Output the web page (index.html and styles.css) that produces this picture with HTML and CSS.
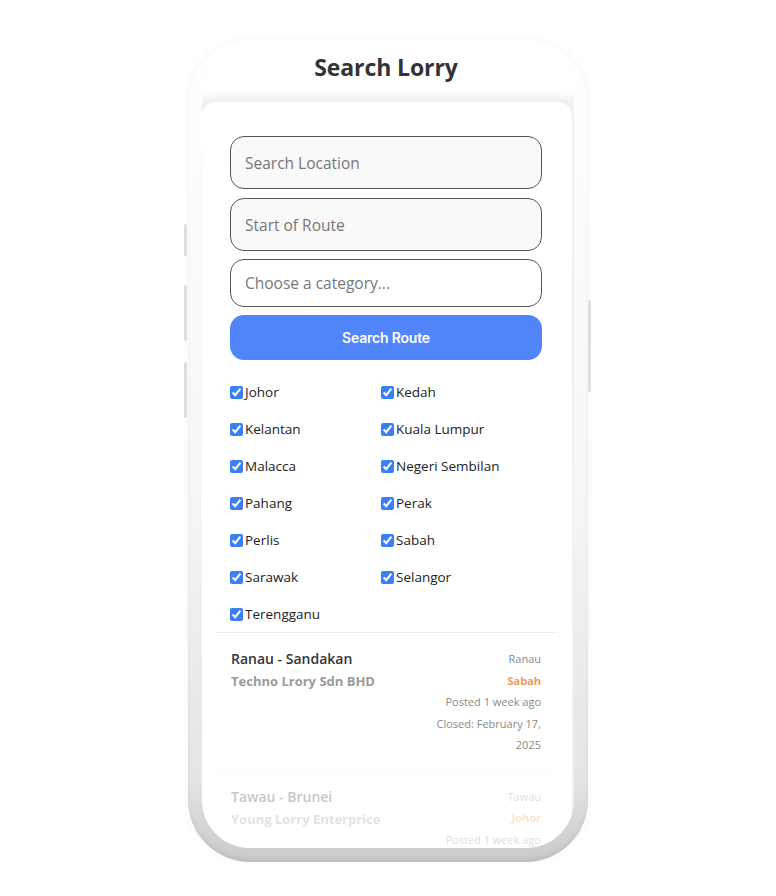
FILE: index.html
```html
<!DOCTYPE html>
<html>

<head>
  <meta charset="UTF-8">
  <title>Search Lorry</title>
  <link rel="stylesheet" href="styles.css">
</head>

<body>
  <div class="phone">
    <span class="side-btn btn-a"></span>
    <span class="side-btn btn-b"></span>
    <span class="side-btn btn-c"></span>
    <span class="side-btn btn-power"></span>

    <div class="screen">
      <div class="header">
        <h1>Search Lorry</h1>
      </div>

      <div class="card">
        <form class="search-form">
          <input class="field" type="text" placeholder="Search Location">
          <input class="field field-second" type="text" placeholder="Start of Route">
          <div class="field select-field">Choose a category...</div>
          <button type="button" class="btn-search">Search Route</button>
        </form>

        <div class="states">
          <label class="state"><input type="checkbox" checked> Johor</label>
          <label class="state"><input type="checkbox" checked> Kedah</label>
          <label class="state"><input type="checkbox" checked> Kelantan</label>
          <label class="state"><input type="checkbox" checked> Kuala Lumpur</label>
          <label class="state"><input type="checkbox" checked> Malacca</label>
          <label class="state"><input type="checkbox" checked> Negeri Sembilan</label>
          <label class="state"><input type="checkbox" checked> Pahang</label>
          <label class="state"><input type="checkbox" checked> Perak</label>
          <label class="state"><input type="checkbox" checked> Perlis</label>
          <label class="state"><input type="checkbox" checked> Sabah</label>
          <label class="state"><input type="checkbox" checked> Sarawak</label>
          <label class="state"><input type="checkbox" checked> Selangor</label>
          <label class="state"><input type="checkbox" checked> Terengganu</label>
        </div>

        <div class="route">
          <div class="route-main">
            <p class="route-title">Ranau - Sandakan</p>
            <p class="route-company">Techno Lrory Sdn BHD</p>
          </div>
          <div class="route-info">
            <p>Ranau</p>
            <p class="route-state">Sabah</p>
            <p>Posted 1 week ago</p>
            <p>Closed: February 17, 2025</p>
          </div>
        </div>

        <div class="route faded">
          <div class="route-main">
            <p class="route-title">Tawau - Brunei</p>
            <p class="route-company">Young Lorry Enterprice</p>
          </div>
          <div class="route-info">
            <p>Tawau</p>
            <p class="route-state">Johor</p>
            <p>Posted 1 week ago</p>
          </div>
        </div>
      </div>
    </div>
  </div>
</body>
</html>
```

FILE: styles.css
```css
body {
  margin: 0;
  background: #ffffff;
  font-family: "Open Sans", "DejaVu Sans", sans-serif;
  display: flex;
  justify-content: center;
  padding-top: 40px;
}

.phone {
  position: relative;
  width: 400px;
  height: 822px;
  box-sizing: border-box;
  padding: 8px 14px 14px 14px;
  border-radius: 62px;
  background: linear-gradient(to bottom, #ffffff 0%, #f6f6f6 55%, #e4e4e4 90%, #c9c9c9 100%);
  box-shadow: 0 0 8px rgba(0, 0, 0, 0.05), inset 0 -3px 4px rgba(0, 0, 0, 0.06);
}

.side-btn {
  position: absolute;
  width: 3px;
  background: #dedede;
  border-radius: 2px;
}

.btn-a {
  left: -4px;
  top: 184px;
  height: 32px;
}

.btn-b {
  left: -4px;
  top: 245px;
  height: 56px;
}

.btn-c {
  left: -4px;
  top: 322px;
  height: 56px;
}

.btn-power {
  right: -3px;
  top: 260px;
  height: 92px;
}

.screen {
  height: 100%;
  border-radius: 48px;
  overflow: hidden;
  background: linear-gradient(to bottom, #ffffff 0px, #ffffff 42px, #f3f3f3 54px);
  display: flex;
  flex-direction: column;
}

.header {
  height: 54px;
  flex-shrink: 0;
  padding-right: 4px;
}

h1 {
  margin: 0;
  padding-top: 3px;
  text-align: center;
  font-size: 23px;
  font-weight: 700;
  color: #333333;
  letter-spacing: -0.1px;
}

.card {
  flex: 1;
  background: #ffffff;
  border-radius: 14px 14px 0 0;
  margin-right: 2px;
  padding: 34px 28px 0 28px;
  box-shadow: 0 -4px 10px rgba(0, 0, 0, 0.03);
}

.search-form {
  display: flex;
  flex-direction: column;
  gap: 8px;
}

.field {
  box-sizing: border-box;
  width: 312px;
  height: 53px;
  border: 1px solid #555555;
  border-radius: 14px;
  background: #f9f9f9;
  padding: 0 14px;
  font-family: inherit;
  font-size: 15.5px;
  color: #333;
  outline: none;
}

.field-second {
  margin-top: 1px;
}

.field::placeholder {
  color: #777777;
}

.select-field {
  height: 48px;
  background: #ffffff;
  display: flex;
  align-items: center;
  color: #777777;
}

.btn-search {
  height: 45px;
  width: 312px;
  border: none;
  border-radius: 14px;
  background: #5285f9;
  color: #ffffff;
  font-family: Inter, sans-serif;
  font-weight: 600;
  font-size: 14px;
  letter-spacing: -0.2px;
}

.states {
  display: grid;
  grid-template-columns: 151px 1fr;
  row-gap: 15px;
  padding-top: 21px;
  padding-bottom: 7px;
}

.state {
  display: flex;
  align-items: center;
  height: 22px;
  font-size: 13.5px;
  color: #222222;
  gap: 2px;
}

.state input {
  margin: 0;
  width: 13px;
  height: 13px;
  accent-color: #3b7ff6;
}

.route {
  display: flex;
  justify-content: space-between;
  border-top: 1px solid #eeeeee;
  margin: 0 -14px;
  padding: 15px 17px 14px 15px;
}

.route p {
  margin: 0;
}

.route-title {
  font-size: 14px;
  font-weight: 600;
  color: #333333;
  line-height: 22px;
}

.route-company {
  font-size: 13px;
  font-weight: 700;
  color: #9a9a9a;
  line-height: 22px;
}

.route-info {
  text-align: right;
  width: 110px;
  font-size: 11px;
  color: #8a8a8a;
  line-height: 21.5px;
}

.route-state {
  font-weight: 700;
  color: #ef9a55;
}

.faded {
  opacity: 0.28;
}
```
